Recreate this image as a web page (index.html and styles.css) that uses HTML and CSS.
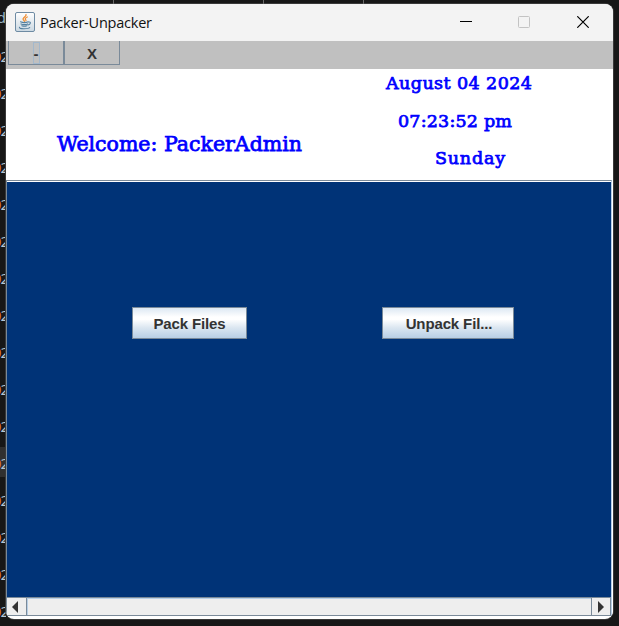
FILE: index.html
```html
<!DOCTYPE html>
<html lang="en">
<head>
<meta charset="utf-8">
<title>Packer-Unpacker</title>
<link rel="stylesheet" href="styles.css">
</head>
<body>
<div class="desktop">
  <div class="ticks"><i></i><i></i><i></i></div>
  <div class="editor">
    <div class="head">d</div>
    <div><b>0</b>2</div><div><b>0</b>2</div><div><b>0</b>2</div><div><b>0</b>2</div>
    <div><b>0</b>2</div><div><b>0</b>2</div><div><b>0</b>2</div><div><b>0</b>2</div>
    <div><b>0</b>2</div><div><b>0</b>2</div><div><b>0</b>2</div><div class="active"><b>0</b>2</div>
    <div><b>0</b>2</div><div><b>0</b>2</div><div><b>0</b>2</div><div><b>0</b>2</div>
  </div>
  <main class="window">
    <header class="titlebar">
      <svg class="java" width="20" height="20" viewBox="0 0 20 20">
        <defs><linearGradient id="tile" x2="0" y2="1"><stop stop-color="#fff"/><stop offset="1" stop-color="#cbd8e2"/></linearGradient></defs>
        <rect x=".5" y=".5" width="19" height="19" rx="1.5" fill="url(#tile)" stroke="#6e8ba3"/>
        <g fill="none" stroke-linecap="round">
          <path d="M11 2.500c1 2-4.200 3-2.700 5.200L9.600 9.300M12.300 5c-2.500 1-2.300 2-1.300 3.500" stroke="#ef8d32" stroke-width="1.300"/>
          <path d="M5.500 9.800c1.800.8 5.800.8 7.800 0M6 11.900c2 .8 5 .8 6.700 0M6.800 13.800c1.600.6 3.600.6 5 0M13.500 10c3-.5 2 2.300-.4 3M4.500 15.300c-1 1.900 8.700 1.900 10.200.2" stroke="#55809f" stroke-width="1.100"/>
        </g>
      </svg>
      <h1>Packer-Unpacker</h1>
      <div class="controls">
        <svg width="12" height="12" viewBox="0 0 12 12"><path d="M0 5.500h12" stroke="#000"/></svg>
        <svg class="maximize" width="12" height="12" viewBox="0 0 12 12"><rect x=".5" y=".5" width="11" height="11" rx="1" fill="none" stroke="#c3c3c3"/></svg>
        <svg width="12" height="12" viewBox="0 0 12 12"><path d="M.3.300l11.400 11.400M11.700.300L.3 11.700" stroke="#000" stroke-width="1.200"/></svg>
      </div>
    </header>
    <nav class="menubar">
      <button><span class="focus">-</span></button><button>X</button>
    </nav>
    <section class="banner">
      <p class="welcome">Welcome: PackerAdmin</p>
      <div class="clock">
        <p class="date">August 04 2024</p>
        <p class="time">07:23:52 pm</p>
        <p class="day">Sunday</p>
      </div>
    </section>
    <section class="pane">
      <div class="work">
        <button class="action pack">Pack Files</button>
        <button class="action unpack">Unpack Fil...</button>
      </div>
      <div class="scrollbar">
        <div class="arrow"><svg width="6" height="12" viewBox="0 0 6 12"><path d="M6 0v12L0 6z" fill="#333"/></svg></div>
        <div class="track"></div>
        <div class="arrow right"><svg width="6" height="12" viewBox="0 0 6 12"><path d="M0 0v12l6-6z" fill="#333"/></svg></div>
      </div>
    </section>
  </main>
</div>
</body>
</html>
```
FILE: styles.css
```css
* { box-sizing: border-box; }
body, h1, p { margin: 0; }
body { width: 619px; height: 626px; overflow: hidden; background: #171717; }
button { font-family: "Liberation Sans", sans-serif; font-weight: bold; font-size: 15px; color: #333; padding: 0; border-radius: 0; }
.desktop { position: relative; width: 619px; height: 626px; display: grid; grid-template-columns: 6px 607px 6px; padding-top: 4px; overflow: hidden; }
.ticks { position: absolute; top: 0; left: 113px; display: flex; }
.ticks i { width: 1px; height: 4px; background: #696969; margin-right: 149px; }
.ticks i:nth-child(2) { margin-right: 99px; }
.editor { width: 6px; height: 622px; overflow: hidden; font: 15px/30px "Noto Sans", sans-serif; color: #b5c5d1; }
.editor div { height: 30px; line-height: 32px; margin-bottom: 7px; display: flex; justify-content: flex-end; margin-right: -3px; }
.editor .head { line-height: 30px; margin-bottom: 8px; margin-top: -2px; margin-right: 0; color: #9ab4c5; }
.editor b { color: #d07820; font-weight: bold; margin-right: -1px; }
.editor .active { background: #303030; }
.window { width: 607px; height: 615px; border-radius: 8px; overflow: hidden; background: #fff; box-shadow: 0 0 0 1px #393939; }
.titlebar { height: 37px; background: #f3f3f3; display: flex; align-items: center; padding: 0 24px 0 9px; }
.java { margin-top: -2px; }
.titlebar h1 { font: 14.500px "Open Sans", sans-serif; letter-spacing: -.22px; margin-left: 5px; color: #111; }
.controls { display: flex; gap: 46px; margin-left: auto; margin-top: -1px; }
.controls svg { display: block; }
.controls .maximize { margin-right: 1px; }
.menubar { height: 28px; background: #c0c0c0; display: flex; padding-left: 2px; }
.menubar button { width: 56px; height: 24px; background: transparent; border: 1px solid #7a8a99; border-top: 0; font-size: 15px; display: flex; align-items: center; justify-content: center; padding-top: 1px; }
.menubar .focus { width: 7px; height: 22px; border: 1px solid #a3b8cc; display: flex; align-items: center; justify-content: center; }
.banner { height: 111px; display: flex; color: #00f; font-family: "DejaVu Serif", serif; -webkit-text-stroke: .75px #00f; }
.banner p { white-space: nowrap; }
.welcome { width: 374px; padding: 62px 0 0 51px; font-size: 20.500px; line-height: 26px; letter-spacing: 0; }
.clock { font-size: 17.500px; line-height: 37px; margin-top: -4px; letter-spacing: .2px; }
.clock p { height: 37.500px; }
.clock .date { padding-left: 6px; letter-spacing: .43px; }
.time { padding-left: 18px; }
.clock .day { padding-left: 55px; letter-spacing: .8px; }
.pane { width: 606px; height: 436px; border: 1px solid #7a8a99; border-right-color: #b8cfe5; box-shadow: 1px 1px #fff; }
.work { height: 416px; background: #003377; border-top: 1px solid #fff; display: flex; align-items: flex-start; padding: 125px 0 0 125px; gap: 135px; }
.action { height: 32px; border: 1px solid #7a8a99; background: linear-gradient(#dde8f3 0, #fff 30%, #fff 38%, #dce7f1 65%, #b8cfe5 100%); letter-spacing: -.13px; }
.pack { width: 115px; }
.unpack { width: 132px; padding-left: 2px; }
.scrollbar { height: 18px; display: flex; border-top: 1px solid #7a8a99; background: #eee; }
.arrow { width: 20px; display: flex; align-items: center; justify-content: center; border-right: 1px solid #7a8a99; padding-right: 3px; }
.arrow.right { border-left: 1px solid #7a8a99; padding-right: 1px; }
.track { flex: 1; border-top: 1px solid #b8cfe5; border-left: 1px solid #b8cfe5; }
```
